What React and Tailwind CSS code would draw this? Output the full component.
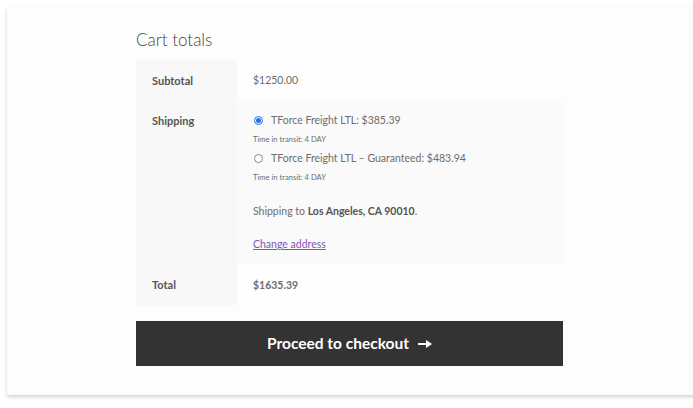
import React from 'react';

const font = { fontFamily: '"Lato", "Liberation Sans", sans-serif' };

const Radio = ({ checked }) => (
  <span
    className={`inline-flex h-[9px] w-[9px] shrink-0 items-center justify-center rounded-full border ${
      checked ? 'border-[#1a73e8]' : 'border-[#8a8a8a] bg-white'
    }`}
  >
    {checked && <span className="h-[5px] w-[5px] rounded-full bg-[#1a73e8]" />}
  </span>
);

const ShippingOption = ({ checked, label }) => (
  <div>
    <div className="flex items-center gap-[8px] pl-[1px]">
      <Radio checked={checked} />
      <span className="text-[10.5px] leading-[16px] text-[#6d6d6d]">{label}</span>
    </div>
    <div className="mt-[6px] text-[7.6px] leading-[10px] text-[#6d6d6d]">Time in transit: 4 DAY</div>
  </div>
);

export default function App() {
  return (
    <div className="h-[408px] w-[693px] overflow-hidden bg-white pt-[7px] pl-[7px]" style={font}>
      <div className="h-[388px] w-[700px] bg-[#fdfdfd] pt-[23px] pl-[129px] shadow-[0_2px_4px_rgba(0,0,0,0.18)]">
        <h2 className="text-[17px] font-light leading-[20px] text-[#444]">Cart totals</h2>

        <div className="mt-[10px] w-[427px] text-[10.5px] text-[#6d6d6d]">
          {/* Subtotal */}
          <div className="flex h-[40px]">
            <div className="flex w-[101px] items-center bg-[#f8f8f8] pt-[2px] pl-[16px] text-[11px] font-bold text-[#555]">
              Subtotal
            </div>
            <div className="flex flex-1 items-center bg-[#fdfdfd] pt-[2px] pl-[16px]">$1250.00</div>
          </div>

          {/* Shipping */}
          <div className="flex h-[163px]">
            <div className="w-[101px] bg-[#f8f8f8] pt-[13px] pl-[16px] text-[11px] font-bold text-[#555]">Shipping</div>
            <div className="flex-1 bg-[#fafafa] pt-[12px] pl-[16px]">
              <div className="flex flex-col gap-[6px]">
                <ShippingOption checked label="TForce Freight LTL: $385.39" />
                <ShippingOption label="TForce Freight LTL – Guaranteed: $483.94" />
              </div>
              <p className="mt-[21px] text-[10.5px] leading-[16px]">
                Shipping to <span className="font-bold text-[#555]">Los Angeles, CA 90010</span>.
              </p>
              <a href="#" className="mt-[17px] inline-block text-[10.5px] leading-[16px] text-[#7f54b3] underline">
                Change address
              </a>
            </div>
          </div>

          {/* Total */}
          <div className="flex h-[42px]">
            <div className="flex w-[101px] items-center bg-[#f8f8f8] pt-[3px] pl-[16px] text-[11px] font-bold text-[#555]">
              Total
            </div>
            <div className="flex flex-1 items-center bg-[#fefefe] pt-[3px] pl-[16px] font-bold">$1635.39</div>
          </div>
        </div>

        <button className="mt-[16px] flex h-[45px] w-[427px] items-center justify-center gap-[9px] bg-[#333333] text-[15.5px] font-bold text-white">
          Proceed to checkout
          <svg width="14" height="8" viewBox="0 0 14 8" fill="white" className="mt-[1px]">
            <rect x="0" y="3" width="9" height="2" />
            <path d="M8 0 L14 4 L8 8 Z" />
          </svg>
        </button>
      </div>
    </div>
  );
}
